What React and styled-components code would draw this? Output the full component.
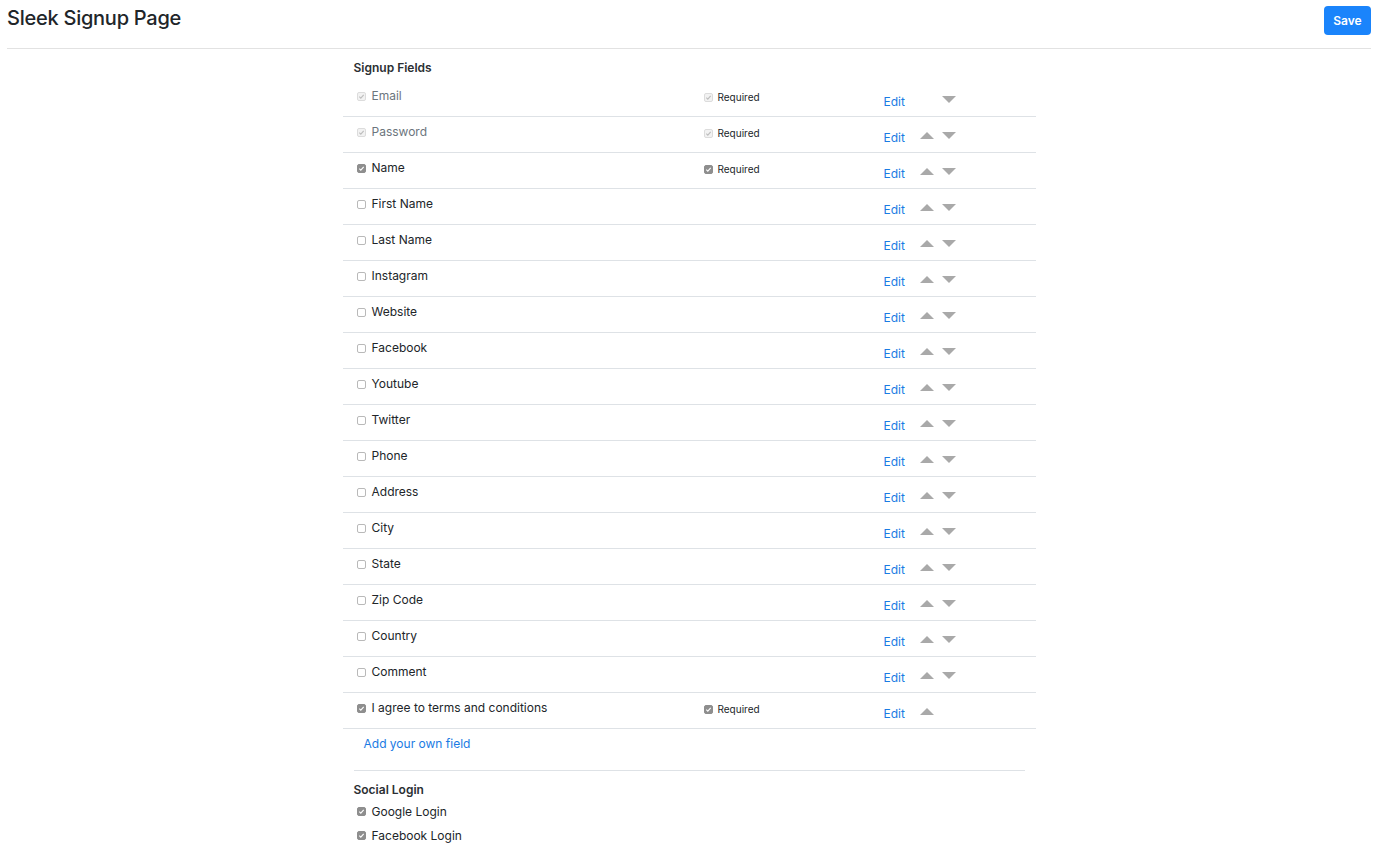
import React from 'react'
import styled, { createGlobalStyle } from 'styled-components'

const GlobalStyle = createGlobalStyle`
  body {
    margin: 0;
    background: #fff;
    font-family: Inter, "Liberation Sans", Arial, sans-serif;
    color: #212529;
  }
`

const Page = styled.div`
  padding: 0 5px 0 7px;
`

const Header = styled.header`
  display: flex;
  justify-content: space-between;
  align-items: flex-start;
  height: 49px;
  border-bottom: 1px solid #e2e2e2;
  box-sizing: border-box;
`

const Title = styled.h1`
  margin: 6px 0 0 0;
  font-size: 20px;
  font-weight: 500;
  line-height: 24px;
  letter-spacing: -0.25px;
  color: #212529;
`

const SaveButton = styled.button`
  margin-top: 6px;
  width: 47px;
  height: 29px;
  border: none;
  border-radius: 4px;
  background: #1a84fb;
  color: #fff;
  font-family: inherit;
  font-size: 12px;
  font-weight: 600;
`

const Content = styled.main`
  width: 693px;
  margin: 0 auto;
`

const SectionTitle = styled.h2`
  margin: 0;
  padding: ${({ $top }) => $top}px 0 ${({ $bottom }) => $bottom}px 11px;
  font-size: 12px;
  font-weight: 600;
  line-height: 18px;
  color: #2b2f33;
`

const Row = styled.div`
  display: grid;
  grid-template-columns: 361px 180px 36px 1fr;
  align-items: start;
  height: 36px;
  box-sizing: border-box;
  border-bottom: 1px solid #dee2e6;
`

const LabelCell = styled.label`
  display: flex;
  align-items: center;
  gap: 6px;
  padding: 6px 0 0 14px;
  font-size: 12px;
  line-height: 18px;
  color: ${({ $muted }) => ($muted ? '#6c757d' : '#212529')};
`

const RequiredCell = styled.label`
  display: flex;
  align-items: center;
  gap: 5px;
  padding-top: 9px;
  font-size: 10px;
  line-height: 14px;
  color: #212529;
`

const EditLink = styled.a`
  padding-top: 12px;
  font-size: 12px;
  line-height: 18px;
  color: #1a7be3;
  text-decoration: none;
`

const Arrows = styled.div`
  display: flex;
  gap: 8px;
  padding-top: 15px;

  svg {
    display: block;
  }
`

const ArrowSlot = styled.span`
  width: 14px;
  height: 7px;
  display: block;
`

const Box = styled.span`
  width: 9px;
  height: 9px;
  box-sizing: border-box;
  border-radius: 2px;
  display: inline-flex;
  align-items: center;
  justify-content: center;
  flex: none;
  background: ${({ $state }) =>
    $state === 'on' ? '#8e8e8e' : $state === 'disabled' ? '#f2f2f2' : '#fff'};
  border: 1px solid
    ${({ $state }) => ($state === 'on' ? '#8e8e8e' : $state === 'disabled' ? '#dcdcdc' : '#b9b9b9')};
`

const AddWrap = styled.div`
  padding: 0 11px;
`

const AddLink = styled.a`
  display: block;
  padding: 6px 0 0 10px;
  height: 42px;
  box-sizing: border-box;
  font-size: 12px;
  line-height: 18px;
  color: #1a7be3;
  text-decoration: none;
  border-bottom: 1px solid #dee2e6;
`

const SocialRow = styled.label`
  display: flex;
  align-items: center;
  gap: 6px;
  padding-left: 14px;
  height: 24px;
  font-size: 12px;
  color: #212529;
`

const Check = ({ state }) => (
  <Box $state={state}>
    {state !== 'off' && (
      <svg width="7" height="7" viewBox="0 0 7 7">
        <path
          d="M1.3 3.7 L2.8 5.1 L5.7 1.8"
          fill="none"
          stroke={state === 'on' ? '#fff' : '#bdbdbd'}
          strokeWidth="1.1"
        />
      </svg>
    )}
  </Box>
)

const Arrow = ({ up }) => (
  <ArrowSlot>
    <svg width="14" height="7" viewBox="0 0 14 7">
      <path d={up ? 'M0 7 L7 0 L14 7 Z' : 'M0 0 L14 0 L7 7 Z'} fill="#a9a9a9" />
    </svg>
  </ArrowSlot>
)

const fields = [
  { name: 'Email', state: 'disabled', required: 'disabled' },
  { name: 'Password', state: 'disabled', required: 'disabled' },
  { name: 'Name', state: 'on', required: 'on' },
  { name: 'First Name' },
  { name: 'Last Name' },
  { name: 'Instagram' },
  { name: 'Website' },
  { name: 'Facebook' },
  { name: 'Youtube' },
  { name: 'Twitter' },
  { name: 'Phone' },
  { name: 'Address' },
  { name: 'City' },
  { name: 'State' },
  { name: 'Zip Code' },
  { name: 'Country' },
  { name: 'Comment' },
  { name: 'I agree to terms and conditions', state: 'on', required: 'on' },
]

export default function App() {
  return (
    <Page>
      <GlobalStyle />
      <Header>
        <Title>Sleek Signup Page</Title>
        <SaveButton>Save</SaveButton>
      </Header>
      <Content>
        <SectionTitle $top={10} $bottom={4}>Signup Fields</SectionTitle>
        {fields.map((f, i) => (
          <Row key={f.name}>
            <LabelCell $muted={f.state === 'disabled'}>
              <Check state={f.state || 'off'} />
              {f.name}
            </LabelCell>
            {f.required ? (
              <RequiredCell>
                <Check state={f.required} />
                Required
              </RequiredCell>
            ) : (
              <div />
            )}
            <EditLink href="#">Edit</EditLink>
            <Arrows>
              {i > 0 ? <Arrow up /> : <ArrowSlot />}
              {i < fields.length - 1 && <Arrow />}
            </Arrows>
          </Row>
        ))}
        <AddWrap>
          <AddLink href="#">Add your own field</AddLink>
        </AddWrap>
        <SectionTitle $top={10} $bottom={0}>Social Login</SectionTitle>
        <SocialRow>
          <Check state="on" />
          Google Login
        </SocialRow>
        <SocialRow>
          <Check state="on" />
          Facebook Login
        </SocialRow>
      </Content>
    </Page>
  )
}
